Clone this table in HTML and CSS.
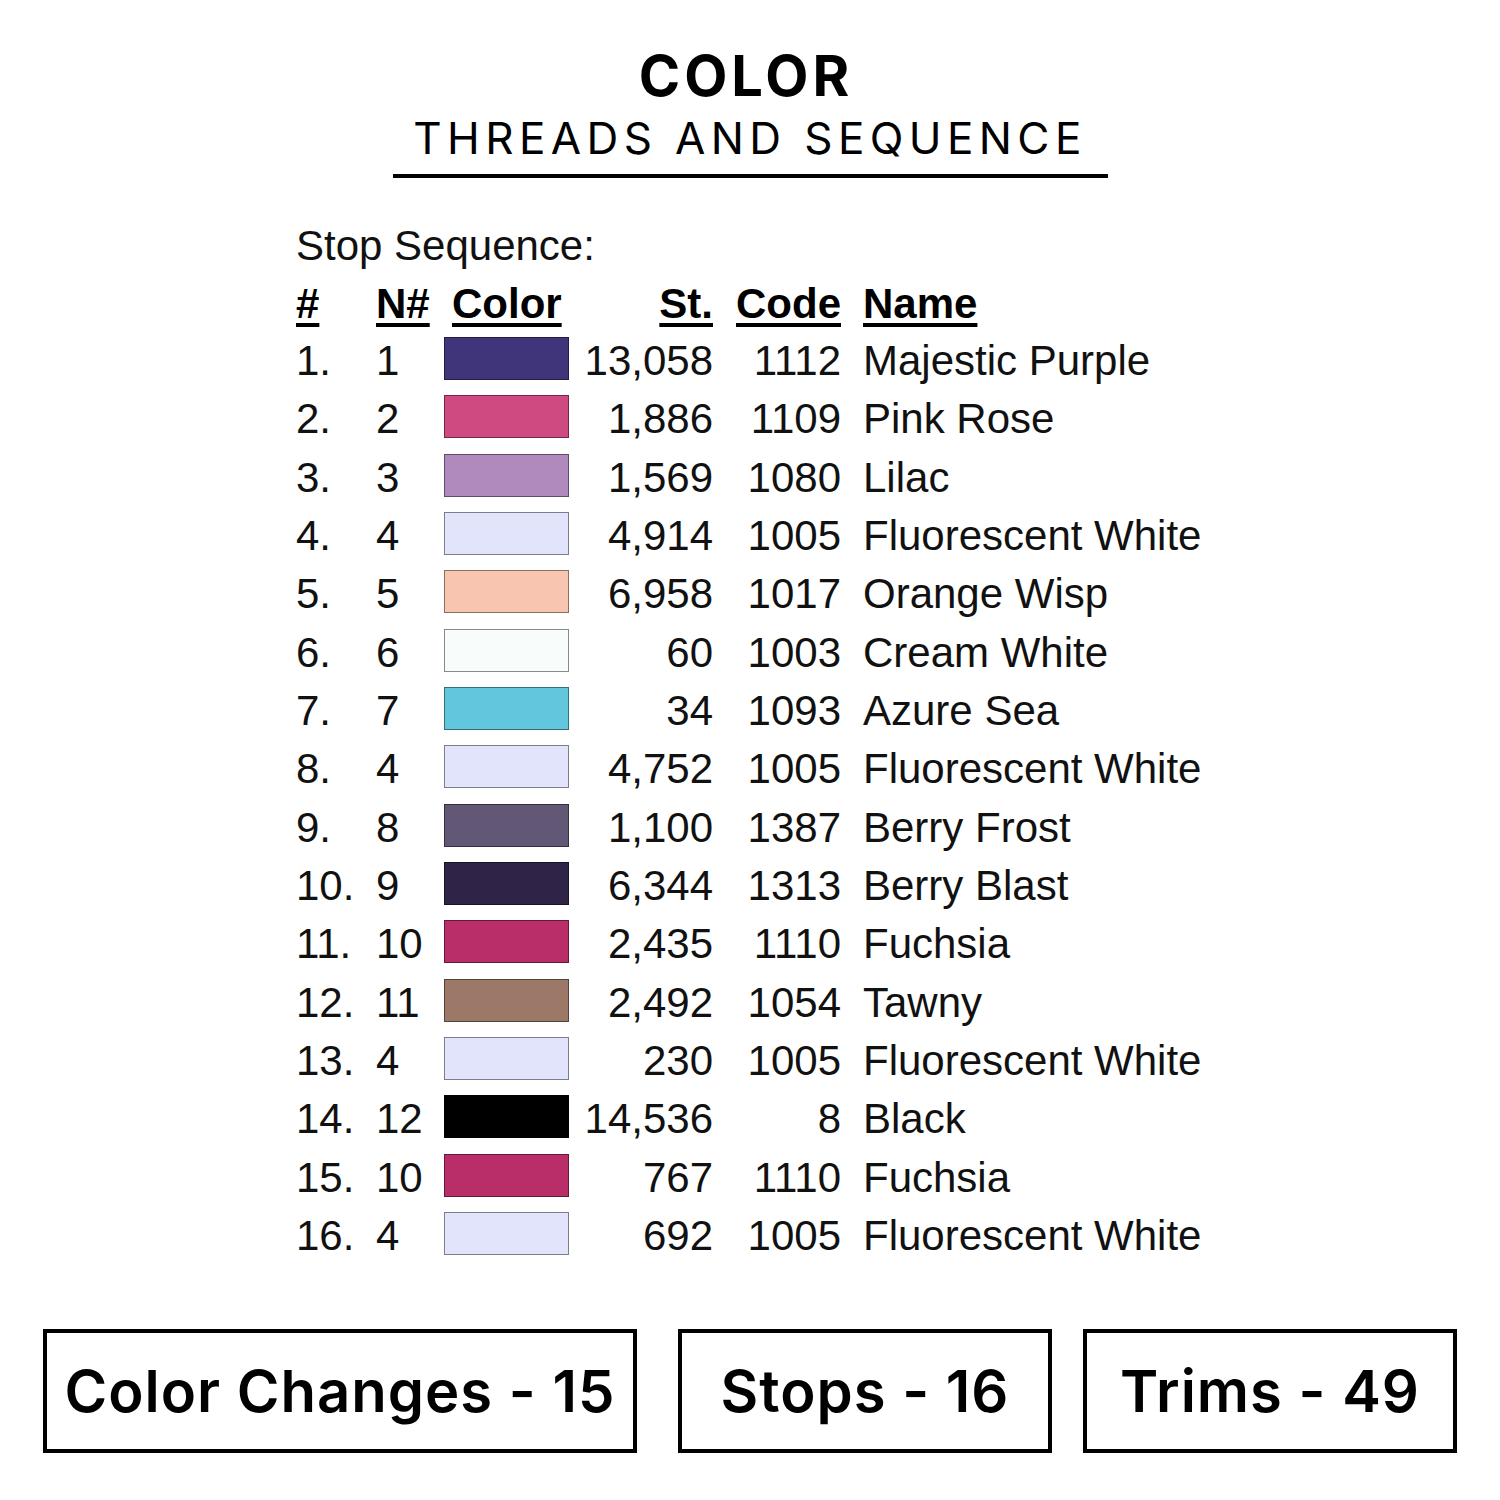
FILE: index.html
```html
<!DOCTYPE html>
<html lang="en">
<head>
<meta charset="utf-8">
<title>Color Threads and Sequence</title>
<link rel="stylesheet" href="styles.css">
</head>
<body>
<main class="page">
  <header class="title">
    <h1 class="title-main">COLOR</h1>
    <h2 class="title-sub">THREADS AND SEQUENCE</h2>
  </header>

  <section class="sequence">
    <p class="seq-label">Stop Sequence:</p>
    <div class="grid">
      <div class="hd c-num">#</div>
      <div class="hd c-n">N#</div>
      <div class="hd c-sw hd-color">Color</div>
      <div class="hd c-st">St.</div>
      <div class="hd c-code">Code</div>
      <div class="hd c-name">Name</div>

      <div class="c-num">1.</div><div class="c-n">1</div><div class="c-sw"><span class="sw sw-purple"></span></div><div class="c-st">13,058</div><div class="c-code">1112</div><div class="c-name">Majestic Purple</div>
      <div class="c-num">2.</div><div class="c-n">2</div><div class="c-sw"><span class="sw sw-pink"></span></div><div class="c-st">1,886</div><div class="c-code">1109</div><div class="c-name">Pink Rose</div>
      <div class="c-num">3.</div><div class="c-n">3</div><div class="c-sw"><span class="sw sw-lilac"></span></div><div class="c-st">1,569</div><div class="c-code">1080</div><div class="c-name">Lilac</div>
      <div class="c-num">4.</div><div class="c-n">4</div><div class="c-sw"><span class="sw sw-fwhite"></span></div><div class="c-st">4,914</div><div class="c-code">1005</div><div class="c-name">Fluorescent White</div>
      <div class="c-num">5.</div><div class="c-n">5</div><div class="c-sw"><span class="sw sw-orange"></span></div><div class="c-st">6,958</div><div class="c-code">1017</div><div class="c-name">Orange Wisp</div>
      <div class="c-num">6.</div><div class="c-n">6</div><div class="c-sw"><span class="sw sw-cream"></span></div><div class="c-st">60</div><div class="c-code">1003</div><div class="c-name">Cream White</div>
      <div class="c-num">7.</div><div class="c-n">7</div><div class="c-sw"><span class="sw sw-azure"></span></div><div class="c-st">34</div><div class="c-code">1093</div><div class="c-name">Azure Sea</div>
      <div class="c-num">8.</div><div class="c-n">4</div><div class="c-sw"><span class="sw sw-fwhite"></span></div><div class="c-st">4,752</div><div class="c-code">1005</div><div class="c-name">Fluorescent White</div>
      <div class="c-num">9.</div><div class="c-n">8</div><div class="c-sw"><span class="sw sw-frost"></span></div><div class="c-st">1,100</div><div class="c-code">1387</div><div class="c-name">Berry Frost</div>
      <div class="c-num">10.</div><div class="c-n">9</div><div class="c-sw"><span class="sw sw-blast"></span></div><div class="c-st">6,344</div><div class="c-code">1313</div><div class="c-name">Berry Blast</div>
      <div class="c-num">11.</div><div class="c-n">10</div><div class="c-sw"><span class="sw sw-fuchsia"></span></div><div class="c-st">2,435</div><div class="c-code">1110</div><div class="c-name">Fuchsia</div>
      <div class="c-num">12.</div><div class="c-n">11</div><div class="c-sw"><span class="sw sw-tawny"></span></div><div class="c-st">2,492</div><div class="c-code">1054</div><div class="c-name">Tawny</div>
      <div class="c-num">13.</div><div class="c-n">4</div><div class="c-sw"><span class="sw sw-fwhite"></span></div><div class="c-st">230</div><div class="c-code">1005</div><div class="c-name">Fluorescent White</div>
      <div class="c-num">14.</div><div class="c-n">12</div><div class="c-sw"><span class="sw sw-black"></span></div><div class="c-st">14,536</div><div class="c-code">8</div><div class="c-name">Black</div>
      <div class="c-num">15.</div><div class="c-n">10</div><div class="c-sw"><span class="sw sw-fuchsia"></span></div><div class="c-st">767</div><div class="c-code">1110</div><div class="c-name">Fuchsia</div>
      <div class="c-num">16.</div><div class="c-n">4</div><div class="c-sw"><span class="sw sw-fwhite"></span></div><div class="c-st">692</div><div class="c-code">1005</div><div class="c-name">Fluorescent White</div>
    </div>
  </section>

  <section class="stats">
    <div class="stat stat-changes">Color Changes - 15</div>
    <div class="stat stat-stops">Stops - 16</div>
    <div class="stat stat-trims">Trims - 49</div>
  </section>
</main>
</body>
</html>
```

FILE: styles.css
```css
html, body {
  margin: 0;
  padding: 0;
  background: #ffffff;
}

.page {
  width: 1500px;
  height: 1500px;
  display: flex;
  flex-direction: column;
  color: #000;
}

.title {
  width: 715px;
  margin: 0 auto;
  padding-top: 46px;
  border-bottom: 4px solid #000;
  display: flex;
  flex-direction: column;
  align-items: center;
}

.title-main {
  margin: 0 0 0 -8px;
  font-family: "Inter", sans-serif;
  font-weight: 700;
  font-size: 56px;
  line-height: 60px;
  letter-spacing: 4px;
}

.title-sub {
  margin: 2px 0 0;
  font-family: "Inter", sans-serif;
  font-weight: 400;
  font-size: 44px;
  line-height: 60px;
  letter-spacing: 5.4px;
  padding-bottom: 6px;
}

.sequence {
  margin: 38px 0 0 296px;
  font-family: "Liberation Sans", Arial, sans-serif;
  font-size: 42px;
  color: #111;
}

.seq-label {
  margin: 0;
  line-height: 60px;
}

.grid {
  display: grid;
  grid-template-columns: 80px 68px 125px 144px 128px auto;
  grid-template-rows: 56px;
  grid-auto-rows: 58.33px;
  align-items: center;
  width: max-content;
}

.hd {
  font-weight: 700;
  text-decoration: underline;
  text-decoration-thickness: 4px;
  text-underline-offset: 5px;
  color: #000;
}

.hd-color { padding-left: 8px; }

.c-num { white-space: nowrap; }
.c-n { white-space: nowrap; }
.c-st { text-align: right; }
.c-code { text-align: right; }
.c-name { padding-left: 22px; white-space: nowrap; }

.c-sw {
  display: flex;
  align-items: center;
  height: 100%;
}

.sw {
  display: block;
  width: 125px;
  height: 43px;
  box-sizing: border-box;
  border: 1.5px solid rgba(0, 0, 0, 0.45);
  margin-top: -5px;
}

.sw-purple  { background: #40357a; }
.sw-pink    { background: #cf4a80; }
.sw-lilac   { background: #b08abd; }
.sw-fwhite  { background: #e2e4fb; }
.sw-orange  { background: #f8c6b0; }
.sw-cream   { background: #f8fcfb; }
.sw-azure   { background: #62c6dc; }
.sw-frost   { background: #625775; }
.sw-blast   { background: #2f2447; }
.sw-fuchsia { background: #b92d68; }
.sw-tawny   { background: #9c7868; }
.sw-black   { background: #000000; }

.stats {
  margin-top: auto;
  margin-bottom: 47px;
  display: flex;
  padding-left: 43px;
}

.stat {
  box-sizing: border-box;
  height: 124px;
  border: 4px solid #000;
  display: flex;
  align-items: center;
  justify-content: center;
  font-family: "Inter", sans-serif;
  font-weight: 600;
  font-size: 58px;
  letter-spacing: 1px;
}

.stat-changes { width: 594px; }
.stat-stops   { width: 374px; margin-left: 41px; }
.stat-trims   { width: 374px; margin-left: 31px; }
```
